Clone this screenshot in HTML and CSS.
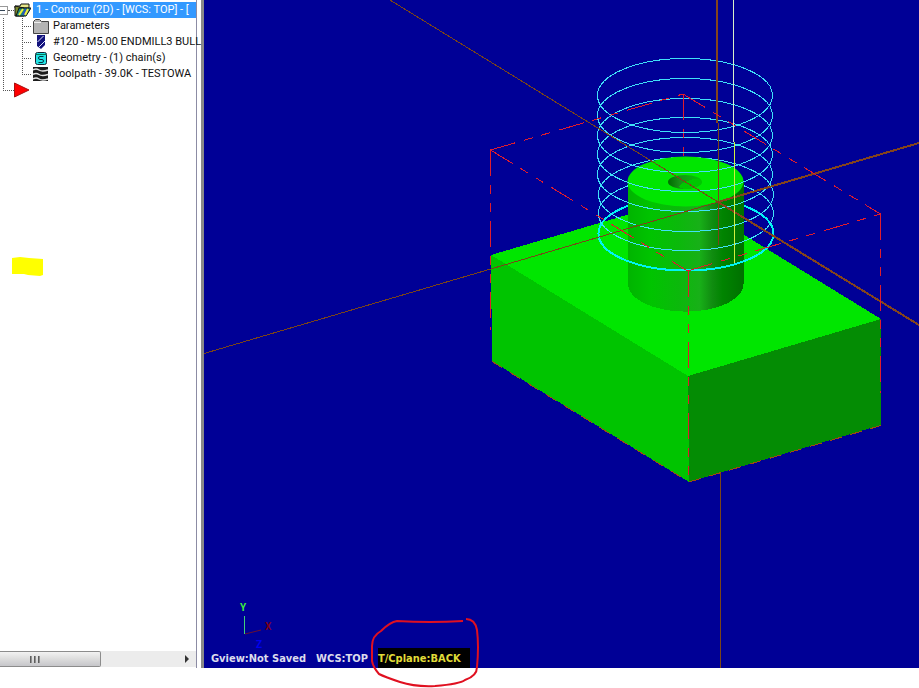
FILE: index.html
```html
<!DOCTYPE html>
<html lang="en">
<head>
  <meta charset="UTF-8">
  <title>Contour (2D) - Toolpath</title>
  <link rel="stylesheet" href="styles.css">
</head>
<body>
  <main class="workspace">
    <aside class="manager">
      <ul class="tree">
        <li class="row">
          <button type="button" class="expander" aria-label="Collapse operation"></button>
          <span class="stub"></span>
          <svg class="icon" width="17" height="16" viewBox="0 0 17 16">
            <path d="M1 4h5l1-2h8v4H1z" fill="#e8e88a" stroke="#111"/>
            <path d="M1 4v10h9V6z" fill="#7d8a2c" stroke="#111"/>
            <path d="M2 14l3-8h12l-5 8z" fill="#1b8c7a" stroke="#111"/>
            <path d="M5 13l4-6" stroke="#f4f03c" stroke-width="2"/>
            <path d="M9 13l3-6" stroke="#2a50c8" stroke-width="2"/>
            <path d="M11 13l3-6" stroke="#f4f03c" stroke-width="2"/>
          </svg>
          <a href="#operation" class="label selected">1 - Contour (2D) - [WCS: TOP] - [</a>
        </li>
        <li class="row">
          <svg class="guide" width="33" height="16"><path d="M3.5 0v16M22.5 0v16M22 8.5h10"/></svg>
          <svg class="icon" width="16" height="16" viewBox="0 0 16 16">
            <path d="M.5 15.5V3.5l2-2h4l2 2h7v12z" fill="#b4b4b4" stroke="#444"/>
            <path d="M1 4.5h7" stroke="#eee"/>
          </svg>
          <a href="#parameters" class="label">Parameters</a>
        </li>
        <li class="row">
          <svg class="guide" width="33" height="16"><path d="M3.5 0v16M22.5 0v16M22 8.5h10"/></svg>
          <svg class="icon" width="16" height="16" viewBox="0 0 16 16">
            <path d="M4 1h8v10l-4 4-4-3z" fill="#12127c"/>
            <path d="M4.500 8l6-6M6 13l6-6" stroke="#dfe3ff"/>
          </svg>
          <a href="#tool" class="label">#120 - M5.00 ENDMILL3 BULL</a>
        </li>
        <li class="row">
          <svg class="guide" width="33" height="16"><path d="M3.5 0v16M22.5 0v16M22 8.5h10"/></svg>
          <svg class="icon" width="16" height="16" viewBox="0 0 16 16">
            <rect x="2.5" y="2.5" width="11" height="12" rx="2" fill="#22e4e4" stroke="#123"/>
            <path d="M3 4.5h10" stroke="#075"/>
            <path d="M10.5 6.5H7q-1.500 0-1.500 1.500T7 9.500h2q1.500 0 1.500 1.500T9 12.500H5.500" fill="none" stroke="#034"/>
          </svg>
          <a href="#geometry" class="label">Geometry - (1) chain(s)</a>
        </li>
        <li class="row">
          <svg class="guide" width="33" height="16"><path d="M3.5 0v16M22.5 0v8M22 8.5h10"/></svg>
          <svg class="icon" width="16" height="16" viewBox="0 0 16 16">
            <rect y="1" width="15" height="14" fill="#1c1c1c"/>
            <path d="M0 4q3-2 6 0t9 0M0 8.500q3-2 6 0t9 0M0 13q3-2 6 0t9 0" fill="none" stroke="#e4e4e4" stroke-width="1.500"/>
          </svg>
          <a href="#toolpath" class="label">Toolpath - 39.0K - TESTOWA</a>
        </li>
        <li class="row">
          <svg class="guide" width="14" height="16"><path d="M3.5 0v8M3 8.5h11"/></svg>
          <svg class="icon" width="16" height="16" viewBox="0 0 16 16"><path d="M.5 1v14L15 8z" fill="#f00" stroke="#a11"/></svg>
        </li>
      </ul>

      <svg class="marker" width="32" height="20" viewBox="0 0 32 20">
        <path d="M0 1l8-1 9 1 14 1v16l-3 1-12-1-4-1H0z" fill="#ff0"/>
      </svg>

      <div class="scrollbar">
        <div class="thumb"><i></i><i></i><i></i></div>
        <button type="button" class="arrow" aria-label="Scroll right"></button>
      </div>
    </aside>

    <section class="viewport">
      <svg class="scene" viewBox="204 0 715 668" preserveAspectRatio="xMinYMin slice">
        <defs>
          <linearGradient id="side">
            <stop offset="0" stop-color="#00b400"/>
            <stop offset=".2" stop-color="#00c400"/>
            <stop offset=".45" stop-color="#0cb80c"/>
            <stop offset=".62" stop-color="#18b018"/>
            <stop offset=".73" stop-color="#108c10"/>
            <stop offset=".82" stop-color="#008400"/>
            <stop offset="1" stop-color="#007000"/>
          </linearGradient>
          <linearGradient id="hole">
            <stop offset="0" stop-color="#006c00"/>
            <stop offset=".35" stop-color="#189018"/>
            <stop offset="1" stop-color="#00c800"/>
          </linearGradient>
        </defs>

        <!-- stock block -->
        <path d="M491 255L684 198L881 319L688 376z" fill="#00e600"/>
        <path d="M491 255L688 376L689 482L492 361z" fill="#00c400"/>
        <path d="M688 376L881 319V425L689 482z" fill="#048c04"/>

        <!-- far side of the helix -->
        <g class="helix">
          <path d="M597.5 95.5a87.500 37 0 0 1 175 0"/>
          <path d="M597.5 115.5a87.500 37 0 0 1 175 0"/>
          <path d="M597.5 135.5a87.500 37 0 0 1 175 0"/>
          <path d="M597.5 154.5a87.500 37 0 0 1 175 0"/>
          <path d="M597.5 174.5a87.500 37 0 0 1 175 0"/>
          <path d="M598.5 194.5a87.500 37 0 0 1 175 0"/>
          <path d="M598.5 213.5a87.500 37 0 0 1 175 0"/>
          <path class="bottom" d="M598.5 233.5a87.500 37 0 0 1 175 0"/>
        </g>
        <path class="stock" d="M683.5 94V157"/>

        <!-- boss -->
        <path d="M628 181V284a57.500 27.500 0 0 0 115.500 0V181z" fill="url(#side)"/>
        <ellipse cx="685.5" cy="181.5" rx="58" ry="25" fill="#00e600"/>
        <ellipse cx="685" cy="182" rx="17" ry="7" fill="url(#hole)"/>
        <path d="M678 187q8-8 20-8l4 3q-5 7-17 7z" fill="#00c800"/>

        <!-- near side of the helix -->
        <g class="helix">
          <path d="M597.5 95.5a87.500 37 0 0 0 175 0"/>
          <path d="M597.5 115.5a87.500 37 0 0 0 175 0"/>
          <path d="M597.5 135.5a87.500 37 0 0 0 175 0"/>
          <path d="M597.5 154.5a87.500 37 0 0 0 175 0"/>
          <path d="M597.5 174.5a87.500 37 0 0 0 175 0"/>
          <path d="M598.5 194.5a87.500 37 0 0 0 175 0"/>
          <path d="M598.5 213.5a87.500 37 0 0 0 175 0"/>
          <path class="bottom" d="M598.5 233.5a87.500 37 0 0 0 175 0"/>
        </g>

        <!-- axes -->
        <g class="axis">
          <path d="M204 353.5L718 202"/>
          <path d="M390 0L718 202"/>
          <path d="M718.5 123V245M720.5 473V668"/>
          <path class="near" d="M718 202L919 143M718 202L919 325M717 0V123"/>
        </g>

        <!-- stock boundary -->
        <g class="stock">
          <path class="faint" d="M492 361.5L689 482L881 425.5"/>
          <path d="M490.5 150L683 94"/>
          <path d="M683 94L880.5 214"/>
          <path d="M490.5 150L687.5 271"/>
          <path d="M687.5 271L880.5 214"/>
          <path d="M490.5 150V330"/>
          <path d="M688.5 271V481"/>
          <path d="M880.5 214V393"/>
        </g>

        <path class="rapid" d="M733.5 0V142"/>
        <path class="plunge" d="M734.5 142V263"/>
      </svg>

      <div class="overlay">
        <svg class="gizmo" width="40" height="47" viewBox="0 0 40 47">
          <path d="M5.5 15v18" stroke="#3fd07c"/>
          <path d="M6 33l16-4" stroke="#6a1030"/>
          <text x="1" y="10" fill="#3df03d">Y</text>
          <text x="26" y="29" fill="#780018">X</text>
          <text x="17" y="47" fill="#0000f0">Z</text>
        </svg>
        <div class="status">
          <span>Gview:Not Saved</span>
          <span>WCS:TOP</span>
          <span class="plane">T/Cplane:BACK
            <svg class="circle" width="110" height="72" viewBox="0 0 110 72">
              <path d="M93 5Q60 7 27 5Q20 6 11 15Q2 20 2 30V45Q3 51 9 58Q15 61 30 66Q45 71 65 70Q90 68 95 64Q107 60 107 51Q109 30 107 14Q105 3 96 3"/>
            </svg>
          </span>
        </div>
      </div>
    </section>
  </main>
</body>
</html>
```

FILE: styles.css
```css
* {
  box-sizing: border-box;
}
body {
  margin: 0;
  background: #fff;
  color: #111;
  font-family: Roboto, "Noto Sans", sans-serif;
  font-size: 11px;
}
.workspace {
  display: grid;
  grid-template-columns: 204px 1fr;
  grid-template-rows: minmax(0, 1fr);
  height: 100vh;
  padding-bottom: 20px;
}

/* operations manager */
.manager {
  position: relative;
  display: flex;
  flex-direction: column;
  justify-content: space-between;
  min-width: 0;
  margin-right: 7px;
  padding-bottom: 1px;
  border-right: 1px solid #8c8ca4;
}
.tree {
  margin: 0;
  padding: 2px 0 0;
  list-style: none;
}
.row {
  display: flex;
  align-items: center;
  height: 16px;
  white-space: nowrap;
}
.icon,
.guide {
  flex: none;
}
.guide path {
  fill: none;
  stroke: #555;
  stroke-dasharray: 1 1;
}
.label {
  margin-left: 4px;
  line-height: 16px;
  color: inherit;
  text-decoration: none;
}
.selected {
  flex: 1;
  margin-left: 2px;
  padding-left: 3px;
  background: #3399ff;
  color: #fff;
}
.expander {
  flex: none;
  width: 8px;
  height: 9px;
  padding: 0;
  border: 1px solid #999;
  border-left: 0;
  background: linear-gradient(#345, #345) 0 3px / 5px 1px no-repeat #fff;
}
.stub {
  flex: none;
  width: 6px;
  border-top: 1px dotted #555;
}
.marker {
  position: absolute;
  top: 257px;
  left: 12px;
}
.scrollbar {
  display: flex;
  justify-content: space-between;
  height: 16px;
  background: #ececec;
}
.thumb {
  display: flex;
  justify-content: center;
  align-items: center;
  gap: 2px;
  width: 101px;
  padding-right: 30px;
  border: 1px solid #8c8c8c;
  border-left: 0;
  border-radius: 0 2px 2px 0;
  background: linear-gradient(#f2f2f2, #dcdcdc 50%, #c6c6ca);
}
.thumb i {
  width: 2px;
  height: 7px;
  background: linear-gradient(90deg, #444, #aaa);
}
.arrow {
  width: 16px;
  padding: 0 0 0 5px;
  border: 0;
  background: none;
}
.arrow::before {
  content: "";
  display: block;
  width: 0;
  border: 4px solid transparent;
  border-left-color: #333;
  border-right: 0;
}

/* graphics window */
.viewport {
  display: grid;
  grid-template: minmax(0, 1fr) / minmax(0, 1fr);
  margin-left: -3px;
  border-left: 3px solid #8a8a8a;
  background: #000096;
}
.scene,
.overlay {
  grid-area: 1 / 1;
}
.scene {
  width: 100%;
  height: 100%;
}
.scene path {
  shape-rendering: crispEdges;
}
.helix path {
  fill: none;
  stroke: #40e0f8;
}
.helix .bottom {
  stroke: #00f4f4;
  stroke-width: 2;
}
.axis path {
  fill: none;
  stroke: #7a4418;
}
.axis .near {
  stroke: #84441c;
  stroke-width: 2;
}
.stock,
.stock path {
  fill: none;
  stroke: #e01c2c;
  stroke-dasharray: 26 9 9 9 9 9;
}
.stock .faint {
  stroke: #a04a10;
  stroke-dasharray: 12 9;
}
.rapid {
  stroke: #d8f0c8;
}
.plunge {
  stroke: #d0f040;
}
.overlay {
  position: relative;
  display: flex;
  flex-direction: column;
  justify-content: flex-end;
}
.gizmo {
  margin-left: 35px;
  overflow: visible;
  font-size: 10px;
  font-weight: bold;
}
.status {
  display: flex;
  gap: 10px;
  height: 20px;
  padding-left: 7px;
  color: #dcdcec;
  font-family: "DejaVu Sans Condensed", "Noto Sans", sans-serif;
  font-weight: bold;
  line-height: 22px;
  white-space: nowrap;
}
.plane {
  position: relative;
  padding-right: 9px;
  background: #000;
  color: #e0dc38;
}
.circle {
  position: absolute;
  top: -32px;
  left: -8px;
}
.circle path {
  fill: none;
  stroke: #e01020;
  stroke-width: 2;
}
```
